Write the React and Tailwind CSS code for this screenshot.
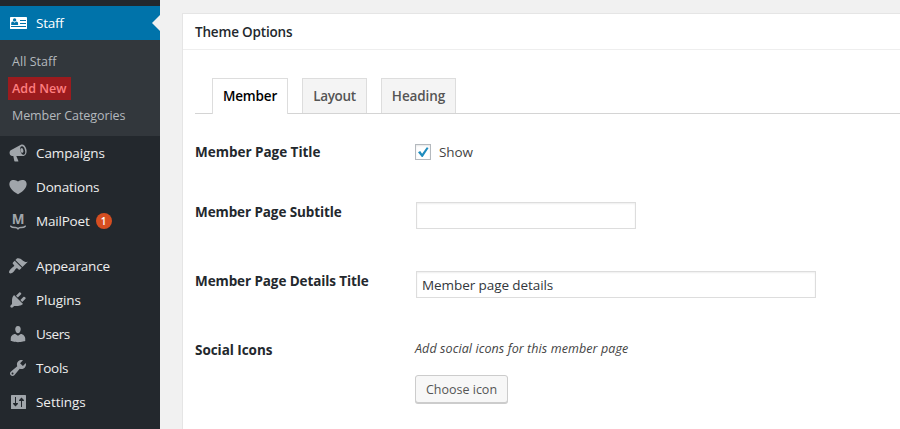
const ICONS = {
  heart:
    "M10 17.300c2.600-1.300 5.600-3.500 7.400-6.200 1.500-2.300 1.700-4.900.5-6.600C16.900 3.200 15.500 2.800 14 2.900c-1.500.1-3 .6-4 1.500-1-.9-2.500-1.400-4-1.500-1.500-.1-2.900.3-3.900 1.600-1.200 1.700-1 4.300.5 6.600C4.400 13.800 7.400 16 10 17.300z",
  brush:
    "M14.480 11.060L7.410 3.990l1.500-1.500c.5-.56 2.300-.47 3.510.32 1.210.8 1.430 1.280 2.910 2.100 1.180.64 2.450 1.260 4.450.85zm-.71.71L6.700 4.700 4.930 6.470c-.39.39-.39 1.020 0 1.410l1.060 1.060c.39.39.39 1.030 0 1.420-.6.6-1.430 1.110-2.210 1.690-.35.26-.7.53-1.010.84C1.430 14.230.4 16.080 1.400 17.070c.99 1 2.840-.03 4.180-1.360.31-.31.58-.66.85-1.020.57-.78 1.080-1.610 1.690-2.210.39-.39 1.020-.39 1.410 0l1.060 1.060c.39.39 1.020.39 1.410 0z",
  plug:
    "M13.110 4.360L9.870 7.600 8 5.730l3.240-3.240c.35-.34 1.050-.2 1.560.32.52.51.66 1.210.31 1.550zm-8 1.770l.91-1.120 9.010 9.010-1.190.84c-.71.71-2.630 1.160-3.820 1.160H6.140L4.900 17.260c-.59.59-1.540.59-2.120 0-.59-.58-.59-1.530 0-2.120l1.240-1.240v-3.880c0-1.130.4-3.190 1.090-3.890zm7.260 3.970l3.240-3.240c.34-.35 1.040-.21 1.550.31.52.51.66 1.210.31 1.550l-3.240 3.250z",
  user:
    "M10 9.250c-2.270 0-2.730-3.440-2.730-3.440C7 4.020 7.820 2 9.970 2c2.160 0 2.980 2.020 2.710 3.810 0 0-.41 3.440-2.680 3.440zm0 2.570L12.720 10c2.390 0 4.520 2.330 4.520 4.530v2.490s-3.650 1.130-7.240 1.130c-3.650 0-7.240-1.130-7.240-1.130v-2.490c0-2.250 1.940-4.480 4.470-4.480z",
  wrench:
    "M16.680 9.770c-1.340 1.340-3.300 1.670-4.950.99l-5.410 6.520c-.99.99-2.590.99-3.580 0s-.99-2.590 0-3.570l6.520-5.420c-.68-1.650-.35-3.610.99-4.950 1.280-1.280 3.120-1.620 4.720-1.060l-2.890 2.890 2.820 2.820 2.860-2.870c.53 1.580.18 3.390-1.080 4.650zM3.810 16.210c.4.39 1.040.39 1.430 0 .4-.4.4-1.040 0-1.430-.39-.4-1.030-.4-1.430 0-.39.39-.39 1.030 0 1.430z",
};

function Svg({ children }) {
  return (
    <svg viewBox="0 0 20 20" className="size-5 shrink-0" fill="currentColor">
      {children}
    </svg>
  );
}

function Glyph({ name }) {
  if (name === "megaphone") {
    return (
      <Svg>
        <path d="M3.200 7.100 12.900 1.700C15.300.8 17.500 2.800 18.300 6s-.1 6.300-2.600 6.900H8.300l2.100 5c.1.400-.1.600-.4.600H6.900c-.3 0-.5-.2-.6-.5l-1-5.100H4.200C2.800 12.900 2 12 1.700 10.700c-.4-1.600.2-3 1.500-3.600z" />
        <ellipse cx="14.700" cy="7.500" rx="2.300" ry="4.400" transform="rotate(-14 14.700 7.500)" fill="#23282d" />
        <ellipse cx="13.900" cy="7.500" rx="1.500" ry="2.400" transform="rotate(-14 13.900 7.500)" />
      </Svg>
    );
  }
  if (name === "sliders") {
    return (
      <Svg>
        <rect x="3" y="3" width="15" height="14" rx="0.6" />
        <g fill="#23282d">
          <path d="M7 5h1v6h1.900v1.100L7.500 14.500 5.100 12.100V11H7z" />
          <path d="M13 15h1V9h1.900V7.900L13.500 5.500 11.100 7.900V9H13z" />
        </g>
      </Svg>
    );
  }
  if (name === "mailpoet") {
    return (
      <Svg>
        <text x="10" y="12.800" textAnchor="middle" className="font-['Open_Sans'] text-[13.5px] font-bold">
          M
        </text>
        <path
          d="M2.800 15.200c1 1.300 2.600 1.500 4.600 1.400 1.200 0 2 .4 2.600 1.200.6-.8 1.400-1.200 2.600-1.200 2 .1 3.600-.1 4.600-1.400"
          fill="none"
          stroke="currentColor"
          strokeWidth="1.500"
          strokeLinecap="round"
        />
      </Svg>
    );
  }
  if (name === "staff") {
    return (
      <Svg>
        <rect x="2" y="4" width="17" height="12" rx="0.4" fill="#fff" />
        <g fill="#0073aa">
          <circle cx="6.600" cy="6.900" r="1.700" />
          <path d="M3.200 12v-1.600c0-1.100.8-1.800 1.800-1.800l1.600 1.200 1.600-1.200c1 0 1.900.7 1.900 1.800V12z" />
          <path d="M12 7h6v1h-6zM12 10h6v1h-6zM3 13h15v1H3z" />
        </g>
      </Svg>
    );
  }
  return (
    <Svg>
      <path fillRule="evenodd" d={ICONS[name]} />
    </Svg>
  );
}

function MenuRow({ icon, label, track, badge }) {
  return (
    <div className="flex h-[34px] items-center pl-2 text-[#a0a5aa]">
      <Glyph name={icon} />
      <span className={`ml-2 text-[#eee] ${track}`}>{label}</span>
      {badge && (
        <span className="ml-[6px] flex size-4 items-center justify-center rounded-full bg-[#d54e21] text-[10px] font-semibold leading-none text-white">
          {badge}
        </span>
      )}
    </div>
  );
}

function Sidebar() {
  return (
    <nav className="w-40 shrink-0 bg-[#23282d] pt-[6px] text-[13.5px]">
      <div className="relative flex h-[34px] items-center bg-[#0073aa] pl-2 text-white">
        <Glyph name="staff" />
        <span className="ml-2 tracking-[-0.25px]">Staff</span>
        <span className="absolute top-[9px] right-0 border-y-8 border-r-8 border-y-transparent border-r-[#f1f1f1]" />
      </div>
      <div className="flex h-24 flex-col items-start bg-[#32373c] pt-2 pl-2 text-[12.5px] text-[#b4b9be]">
        <span className="flex h-[27px] items-center px-1 pt-[2px] tracking-[0.05px]">All Staff</span>
        <span className="mt-[2px] flex h-[23px] w-[63px] items-center bg-[#9b1b1e] px-1 pt-px font-semibold tracking-[0.05px] text-[#ff7f80]">
          Add New
        </span>
        <span className="mt-[2px] flex h-[27px] items-center px-1 pt-[2px] tracking-[-0.08px]">Member Categories</span>
      </div>
      <MenuRow icon="megaphone" label="Campaigns" track="tracking-[-0.1px]" />
      <MenuRow icon="heart" label="Donations" track="tracking-[-0.15px]" />
      <MenuRow icon="mailpoet" label="MailPoet" track="tracking-[-0.2px]" badge="1" />
      <div className="h-[11px]" />
      <MenuRow icon="brush" label="Appearance" track="tracking-[-0.15px]" />
      <MenuRow icon="plug" label="Plugins" track="tracking-[-0.05px]" />
      <MenuRow icon="user" label="Users" track="tracking-[-0.4px]" />
      <MenuRow icon="wrench" label="Tools" track="tracking-[-0.25px]" />
      <MenuRow icon="sliders" label="Settings" track="tracking-[-0.05px]" />
    </nav>
  );
}

function Field({ label, className, track, children }) {
  return (
    <div className={`flex items-start ${className}`}>
      <div className={`w-[220px] shrink-0 text-[13.5px] leading-5 font-bold text-[#23282d] ${track}`}>{label}</div>
      {children}
    </div>
  );
}

export default function App() {
  return (
    <div className="flex h-[429px] w-[900px] overflow-hidden bg-[#f1f1f1] font-['Open_Sans','Noto_Sans',sans-serif]">
      <Sidebar />
      <main className="mt-[13px] ml-[22px] flex-1 border-t border-l border-[#e5e5e5] bg-white">
        <h2 className="flex h-[36px] items-center border-b border-[#eee] pt-[2px] pl-3 text-[13.5px] font-semibold tracking-[-0.18px] text-[#23282d]">
          Theme Options
        </h2>
        <div className="pl-3">
          <div className="mt-[28px] flex h-9 items-stretch border-b border-[#d4d4d4] pl-[17px] text-[13.5px] font-semibold">
            <div className="-mb-px flex w-[76px] items-center justify-center border border-b-0 border-[#ddd] bg-white tracking-[-0.15px] text-black">
              Member
            </div>
            <div className="ml-[14px] flex w-[65px] items-center justify-center border border-b-0 border-[#ddd] bg-[#f4f4f4] pt-px tracking-[-0.3px] text-[#555]">
              Layout
            </div>
            <div className="ml-[14px] flex w-[75px] items-center justify-center border border-b-0 border-[#ddd] bg-[#f4f4f4] pt-px tracking-[-0.1px] text-[#555]">
              Heading
            </div>
          </div>
          <Field label="Member Page Title" className="mt-7 h-[60px]" track="tracking-[-0.02px]">
            <label className="flex h-5 items-center text-[13.5px] text-[#444]">
              <span className="flex size-4 items-center justify-center border border-[#b4b9be] bg-white shadow-[inset_0_1px_2px_rgba(0,0,0,0.1)]">
                <svg viewBox="0 0 14 14" className="size-[14px]">
                  <path d="M2 7.200 4.200 6.100l1.900 2.600L10.800 2.200l1.800.8L6.700 12H5.800z" fill="#1e8cbe" />
                </svg>
              </span>
              <span className="ml-2 tracking-[-0.1px]">Show</span>
            </label>
          </Field>
          <Field label="Member Page Subtitle" className="h-[69px]" track="tracking-[-0.1px]">
            <div className="ml-px h-[27px] w-[220px] border border-[#ddd] bg-white shadow-[inset_0_1px_2px_rgba(0,0,0,0.07)]" />
          </Field>
          <Field label="Member Page Details Title" className="h-[69px]" track="tracking-[-0.1px]">
            <div className="ml-px flex h-[27px] w-[400px] items-center border border-[#ddd] bg-white pt-[2px] pl-[5px] text-[13.5px] tracking-[-0.08px] text-[#32373c] shadow-[inset_0_1px_2px_rgba(0,0,0,0.07)]">
              Member page details
            </div>
          </Field>
          <Field label="Social Icons" className="" track="tracking-[-0.05px]">
            <div className="pt-px">
              <p className="text-[12.5px] leading-4 tracking-[0.09px] text-[#444] italic">Add social icons for this member page</p>
              <button className="mt-[18px] flex h-7 w-[93px] items-center justify-center rounded-[3px] border border-[#ccc] bg-[#f7f7f7] pt-[2px] text-[12.5px] text-[#555] shadow-[0_1px_0_#ccc]">
                Choose icon
              </button>
            </div>
          </Field>
        </div>
      </main>
    </div>
  );
}
